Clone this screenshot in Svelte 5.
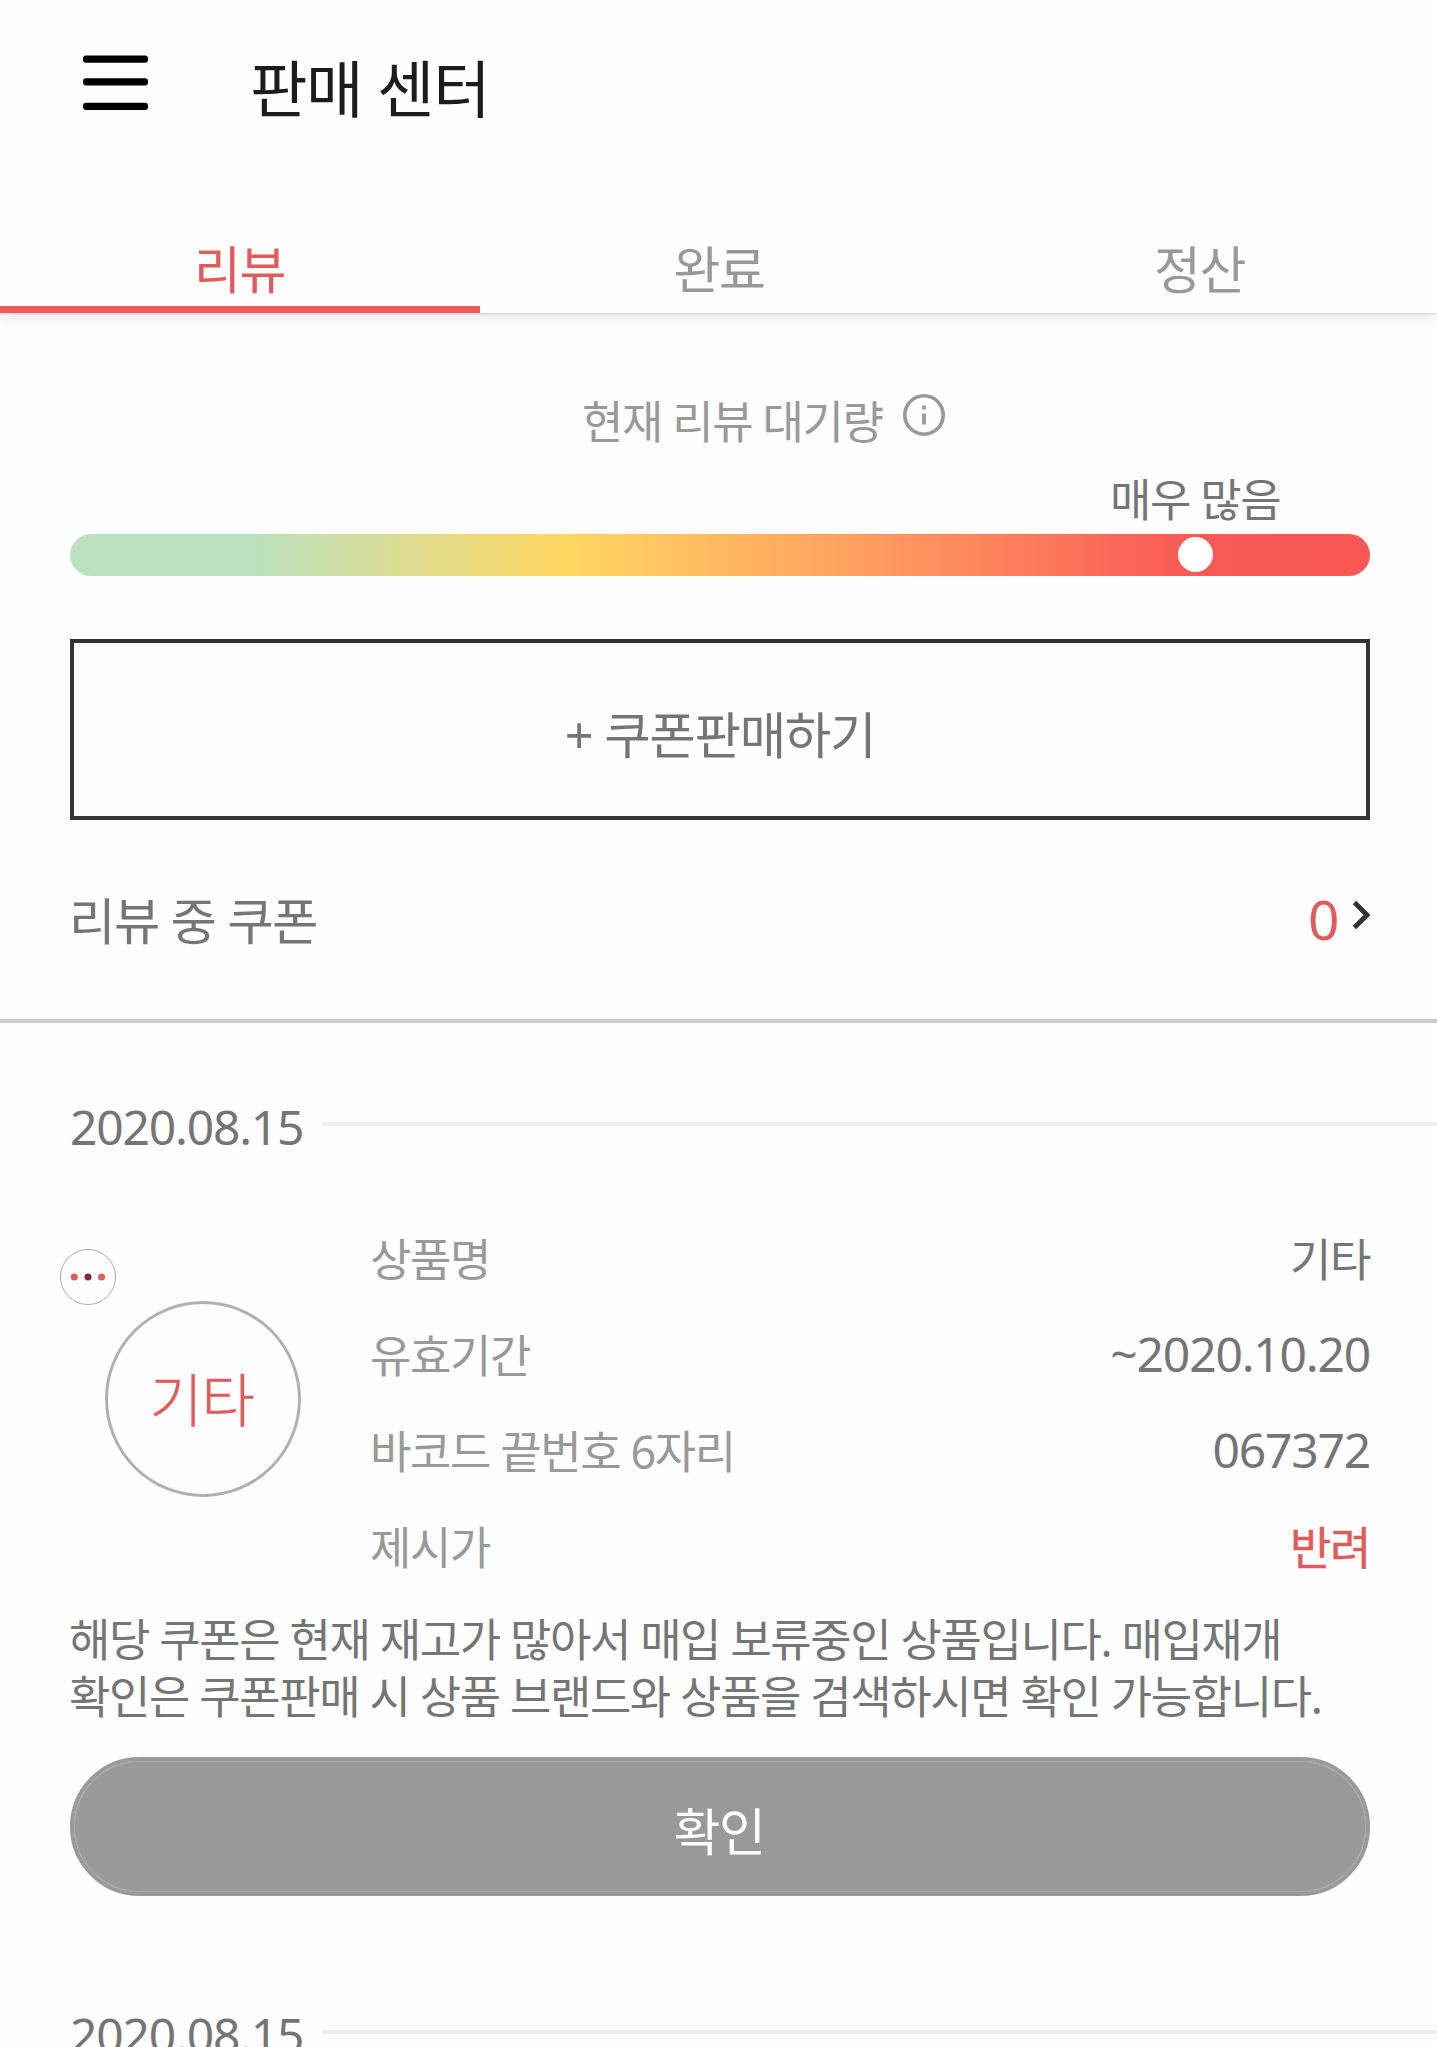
<script>
  const tabs = ['리뷰', '완료', '정산'];
  let active = $state(0);
  const coupons = [
    {
      date: '2020.08.15',
      brand: '기타',
      rows: [
        { label: '상품명', value: '기타' },
        { label: '유효기간', value: '~2020.10.20', numeric: true },
        { label: '바코드 끝번호 6자리', value: '067372', numeric: true },
        { label: '제시가', value: '반려', rejected: true }
      ],
      message: ['해당 쿠폰은 현재 재고가 많아서 매입 보류중인 상품입니다. 매입재개', '확인은 쿠폰판매 시 상품 브랜드와 상품을 검색하시면 확인 가능합니다.']
    }
  ];
</script>

<div class="screen">
  <header>
    <button class="menu" aria-label="메뉴">
      <svg width="65" height="56" viewBox="0 0 65 56">
        <rect y="0.5" width="65" height="7.3" rx="3" />
        <rect y="23.3" width="65" height="7.3" rx="3" />
        <rect y="47.7" width="65" height="7.3" rx="3" />
      </svg>
    </button>
    <h1>판매 센터</h1>
  </header>

  <nav>
    {#each tabs as tab, i}
      <button class="tab" class:active={active === i} onclick={() => (active = i)}>{tab}</button>
    {/each}
  </nav>

  <main>
    <div class="queue-title">
      <span>현재 리뷰 대기량</span>
      <svg width="42" height="42" viewBox="0 0 42 42">
        <circle cx="21" cy="21" r="19.2" fill="none" stroke="#999" stroke-width="3.6" />
        <path d="M21 11.5v4M21 19.5v11" stroke="#a0a0a0" stroke-width="4" />
      </svg>
    </div>
    <div class="level">매우 많음</div>
    <div class="gauge"><i></i></div>

    <button class="sell"><span>+ 쿠폰판매하기</span></button>

    <div class="reviewing">
      <span>리뷰 중 쿠폰</span>
      <span class="count">0</span>
      <svg width="17" height="30" viewBox="0 0 17 30">
        <path d="M1.5 2.5 14 15 1.5 27.5" fill="none" stroke="#333" stroke-width="4.8" />
      </svg>
    </div>
  </main>

  <hr />

  {#each coupons as c}
    <section>
      <div class="date"><span>{c.date}</span><i></i></div>
      <div class="detail">
        <div class="brand">
          <span>{c.brand}</span>
          <svg class="badge" width="56" height="56" viewBox="0 0 56 56">
            <circle cx="28" cy="28" r="27.5" fill="#fefefe" stroke="#aaa" stroke-width="1" />
            <circle cx="14.3" cy="28" r="3.5" fill="#d8605a" />
            <circle cx="28" cy="28" r="3.5" fill="#7d2a38" />
            <circle cx="41.5" cy="28" r="3.5" fill="#d8605a" />
          </svg>
        </div>
        <dl>
          {#each c.rows as r}
            <div><dt>{r.label}</dt><dd class:numeric={r.numeric} class:rejected={r.rejected}>{r.value}</dd></div>
          {/each}
        </dl>
      </div>
      <p>{#each c.message as line}<span>{line}</span>{/each}</p>
      <button class="confirm"><span>확인</span></button>
    </section>
  {/each}

  <div class="date"><span>2020.08.15</span><i></i></div>
</div>

<style>
  :global(body) { background: #fefefe; }
  .screen {
    width: 1437px;
    height: 2047px;
    overflow: hidden;
    background: #fefefe;
    color: #757575;
    font-family: 'Noto Sans', 'Noto Sans CJK KR', sans-serif;
    font-size: 45px;
    letter-spacing: -1.42px;
  }
  button {
    font: inherit;
    letter-spacing: inherit;
    color: inherit;
    background: none;
    border: 0;
    padding: 0;
  }
  svg { display: block; flex: none; }
  header {
    display: flex;
    align-items: center;
    height: 177px;
    box-sizing: border-box;
    padding: 0 83px 12px;
  }
  .menu { width: 65px; }
  h1 {
    margin: 13px 0 0 102px;
    font-size: 62.5px;
    font-weight: 400;
    line-height: 80px;
    letter-spacing: -1.4px;
    color: #1c1c1e;
  }
  nav {
    display: grid;
    grid-template-columns: 480px 479px 478px;
    height: 136px;
    box-shadow: 0 1px 2px rgba(0, 0, 0, 0.14), 0 3px 14px rgba(0, 0, 0, 0.11);
    clip-path: inset(0 0 -20px 0);
  }
  .tab {
    box-sizing: border-box;
    padding: 54px 1px 0 0;
    border-bottom: 7px solid transparent;
    font-size: 51px;
    line-height: 72px;
    color: #999;
  }
  .tab:last-child { padding-left: 4px; }
  .tab.active { color: #e05c5c; border-color: #ef5b5b; }
  main {
    height: 706px;
    box-sizing: border-box;
    padding: 73px 67px 0 70px;
  }
  .queue-title {
    display: flex;
    align-items: center;
    height: 66px;
    padding-left: 512px;
    color: #999;
  }
  .queue-title svg { margin: -9px 0 0 21px; }
  .level {
    height: 66px;
    margin-top: 15px;
    padding-left: 1040px;
    line-height: 66px;
  }
  .gauge {
    display: flex;
    align-items: center;
    height: 42px;
    margin-top: 1px;
    border-radius: 21px;
    background: linear-gradient(90deg, #bbe1bf 0%, #bbe1bf 14%, #ffd763 38%, #ff9b60 62%, #f85a56 86%, #f85754 100%);
  }
  .gauge i {
    width: 35px;
    height: 35px;
    margin: -1px 0 0 1108px;
    border-radius: 50%;
    background: #fff;
  }
  .sell {
    display: block;
    width: 100%;
    height: 181px;
    margin-top: 63px;
    padding-top: 4px;
    border: 4px solid #343434;
    font-size: 50.5px;
    letter-spacing: -1.3px;
  }
  .reviewing {
    display: flex;
    align-items: center;
    height: 66px;
    margin-top: 65px;
    font-size: 50.5px;
    letter-spacing: -1.5px;
  }
  .reviewing > span:first-child { margin-left: -1px; }
  .count {
    margin-left: auto;
    font-size: 55px;
    color: #e05c5c;
  }
  .reviewing svg { margin: -6px 0 0 15px; }
  hr {
    height: 4px;
    margin: 0;
    border: 0;
    background: #ccc;
  }
  .date {
    display: flex;
    align-items: center;
    height: 66px;
    padding: 70px 0 1px 70px;
    font-size: 48px;
    letter-spacing: -1.2px;
  }
  .date span { width: 252px; }
  .date i {
    flex: 1;
    height: 4px;
    margin-top: -4px;
    background: #eee;
  }
  section { height: 908px; }
  .detail {
    display: flex;
    height: 384px;
    padding: 52px 67px 0 105px;
  }
  .brand {
    position: relative;
    display: flex;
    flex: none;
    align-items: center;
    justify-content: center;
    width: 196px;
    height: 196px;
    box-sizing: border-box;
    margin-top: 89px;
    border: 3px solid #b0b0b0;
    border-radius: 50%;
    font-size: 58px;
    font-weight: 300;
    color: #e05c5c;
    -webkit-text-stroke: 0.4px #e05c5c;
  }
  .brand span { padding: 0 3px 4px 0; }
  .badge { position: absolute; top: -55px; left: -48px; }
  dl {
    flex: 1;
    margin: 0 0 0 69px;
  }
  dl div {
    display: flex;
    justify-content: space-between;
    height: 96px;
    line-height: 96px;
  }
  dt { color: #999; }
  dd { margin: 0; }
  dd.numeric { font-size: 48px; letter-spacing: -1.2px; line-height: 92px; }
  dd.rejected { color: #e05c5c; -webkit-text-stroke: 0.5px #e05c5c; }
  p {
    margin: 15px 0 0;
    padding-left: 69px;
    line-height: 57px;
    white-space: nowrap;
  }
  p span { display: block; }
  .confirm {
    display: block;
    width: 1300px;
    height: 139px;
    margin: 32px 0 0 70px;
    padding: 4px 2px 0 0;
    border: 4px solid #999;
    border-radius: 70px;
    background: #999;
    background-clip: padding-box;
    box-shadow: inset 0 0 0 1px #a9a9a9;
    font-size: 51px;
    color: #fff;
  }
</style>
